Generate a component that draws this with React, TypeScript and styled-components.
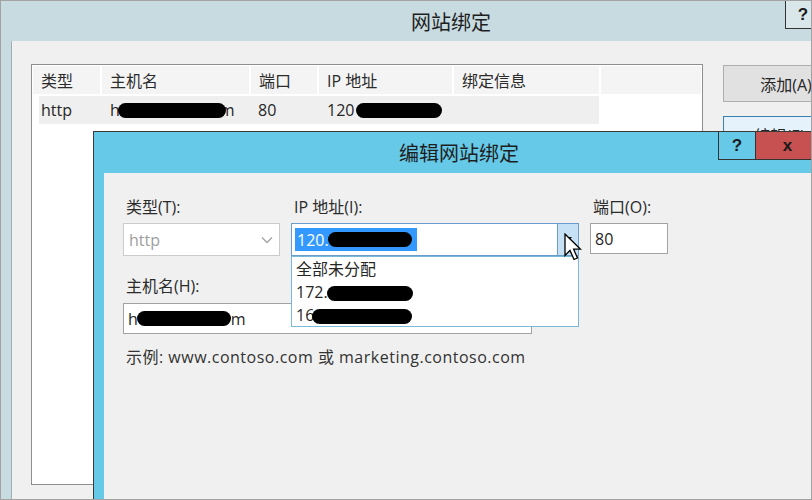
import React from "react";
import styled, { createGlobalStyle } from "styled-components";

const GlobalStyle = createGlobalStyle`
  html, body {
    margin: 0;
    padding: 0;
    background: #ffffff;
  }
  body {
    font-family: "Open Sans", "Noto Sans CJK SC", sans-serif;
    color: #262626;
  }
`;

// the screenshot frame, everything outside it is cut off
const Screen = styled.div`
  position: relative;
  width: 812px;
  height: 500px;
  box-sizing: border-box;
  border: 1px solid #a3a3a3;
  overflow: hidden;
  background: #c8dbe1;
`;

// outer window "网站绑定"
const OuterWindow = styled.div`
  width: 900px;
  height: 100%;
  display: flex;
  flex-direction: column;
  background: #c8dbe1;
`;

const TitleBar = styled.div<{ $height: number }>`
  height: ${(p) => p.$height}px;
  flex: none;
  display: grid;
  grid-template-columns: 1fr auto 1fr;
  align-items: start;
`;

const TitleText = styled.div<{ $height: number }>`
  grid-column: 2;
  height: ${(p) => p.$height}px;
  display: flex;
  align-items: center;
  font-size: 20px;
  color: #1e1e1e;
  white-space: nowrap;
`;

const CaptionButtons = styled.div<{ $right: number }>`
  grid-column: 3;
  justify-self: end;
  display: flex;
  margin-right: ${(p) => p.$right}px;
`;

const CaptionButton = styled.div<{ $width: number; $bg: string }>`
  width: ${(p) => p.$width}px;
  height: 28px;
  box-sizing: border-box;
  background: ${(p) => p.$bg};
  border: 1px solid #333333;
  border-top: none;
  margin-left: -1px;
  display: flex;
  align-items: center;
  justify-content: center;
  font-family: "Liberation Sans", Arial, sans-serif;
  font-weight: bold;
  font-size: 17px;
  color: #1a1a1a;
`;

const OuterBody = styled.div`
  flex: 1;
  display: flex;
  padding-left: 10px;
`;

const OuterClient = styled.div`
  flex: 1;
  display: flex;
  align-items: flex-start;
  background: #f0f0f0;
  border-left: 1px solid #9db0b6;
  padding: 23px 0 0 19px;
`;

const ListBox = styled.div`
  width: 672px;
  height: 421px;
  box-sizing: border-box;
  border: 1px solid #8d8e8f;
  background: #ffffff;
  padding: 1px;
  font-size: 16px;
`;

const HeaderRow = styled.div`
  display: grid;
  grid-template-columns: 67px 147px 66px 133px 145px 1fr;
  column-gap: 2px;
  height: 28px;
  margin-bottom: 2px;
`;

const HeaderCell = styled.div`
  background: #f4f4f4;
  display: flex;
  align-items: center;
  padding-left: 8px;
  color: #2b2b2b;
  white-space: nowrap;
`;

const DataRow = styled.div`
  display: grid;
  grid-template-columns: 63px 149px 68px 135px 145px;
  height: 28px;
  margin-left: 6px;
`;

const DataCell = styled.div<{ $pad: number }>`
  background: #efefef;
  display: flex;
  align-items: center;
  padding-left: ${(p) => p.$pad}px;
  white-space: nowrap;
  color: #262626;
`;

// redaction blot
const Blot = styled.span<{ $w: number; $h?: number }>`
  display: inline-block;
  width: ${(p) => p.$w}px;
  height: ${(p) => p.$h ?? 15}px;
  background: #000000;
  border-radius: 999px;
  filter: blur(0.6px);
  vertical-align: middle;
  position: relative;
`;

const ButtonColumn = styled.div`
  display: flex;
  flex-direction: column;
  gap: 14px;
  margin-left: 20px;
  padding-top: 1px;
`;

const PushButton = styled.div<{ $focused?: boolean }>`
  width: 126px;
  height: 37px;
  box-sizing: border-box;
  border: 1px solid ${(p) => (p.$focused ? "#3c7fb1" : "#adadad")};
  background: ${(p) => (p.$focused ? "#e5f1fb" : "#e1e1e1")};
  display: flex;
  align-items: center;
  justify-content: center;
  font-size: 16px;
  color: #262626;
`;

// inner dialog "编辑网站绑定", a window lying over the first one
const Dialog = styled.div`
  position: absolute;
  left: 92px;
  top: 130px;
  width: 732px;
  height: 400px;
  box-sizing: border-box;
  border: 1px solid #3a3a3a;
  background: #66c9e8;
  display: flex;
  flex-direction: column;
`;

const DialogBody = styled.div`
  flex: 1;
  display: flex;
  padding-left: 10px;
`;

const DialogClient = styled.div`
  flex: 1;
  background: #f0f0f0;
  padding: 24px 0 0 19px;
  font-size: 16px;
`;

const FieldRow = styled.div`
  display: grid;
  grid-template-columns: 157px 288px 78px;
  column-gap: 11px;
`;

const Field = styled.div`
  display: flex;
  flex-direction: column;
  position: relative;
`;

const Label = styled.div<{ $gap: number }>`
  height: 20px;
  line-height: 20px;
  padding-left: 3px;
  margin-bottom: ${(p) => p.$gap}px;
  color: #2b2b2b;
  white-space: nowrap;
`;

const Combo = styled.div<{ $active?: boolean }>`
  position: relative;
  height: 33px;
  box-sizing: border-box;
  display: flex;
  align-items: center;
  background: #ffffff;
  border: 1px solid ${(p) => (p.$active ? "#6a9ccc" : "#cbcbcb")};
`;

const ComboText = styled.div<{ $muted?: boolean }>`
  flex: 1;
  padding-left: 5px;
  color: ${(p) => (p.$muted ? "#9e9e9e" : "#262626")};
  white-space: nowrap;
`;

const Chevron = styled.svg`
  margin-right: 6px;
  flex: none;
`;

const Selection = styled.span`
  display: inline-flex;
  align-items: center;
  height: 23px;
  margin-left: -2px;
  padding-left: 2px;
  width: 120px;
  background: #3399ff;
  color: #ffffff;
`;

const DropButton = styled.div`
  position: relative;
  width: 21px;
  height: 100%;
  box-sizing: border-box;
  background: #c6e0f5;
  border-left: 1px solid #6a9ccc;
  display: flex;
  align-items: center;
  justify-content: center;
`;

const Pointer = styled.svg`
  position: absolute;
  left: 6px;
  top: 9px;
  z-index: 3;
`;

const DropList = styled.div`
  position: absolute;
  left: 0;
  top: 59px;
  width: 288px;
  height: 71px;
  box-sizing: border-box;
  border: 1px solid #78bad9;
  background: #ffffff;
  padding-top: 1px;
  z-index: 2;
`;

const DropItem = styled.div`
  height: 23px;
  line-height: 23px;
  padding-left: 4px;
  white-space: nowrap;
`;

const TextBox = styled.div<{ $width?: number }>`
  ${(p) => (p.$width ? `width: ${p.$width}px;` : "")}
  height: 31px;
  box-sizing: border-box;
  border: 1px solid #a2a2a2;
  background: #ffffff;
  display: flex;
  align-items: center;
  padding-left: 4px;
  white-space: nowrap;
`;

const HostField = styled.div`
  margin-top: 20px;
  display: flex;
  flex-direction: column;
`;

const Hint = styled.div`
  margin-top: 13px;
  padding-left: 3px;
  line-height: 20px;
  letter-spacing: 0.5px;
  color: #333333;
  white-space: nowrap;
`;

export default function App() {
  return (
    <>
      <GlobalStyle />
      <Screen>
        <OuterWindow>
          <TitleBar $height={40}>
            <TitleText $height={40}>网站绑定</TitleText>
            <CaptionButtons $right={80}>
              <CaptionButton $width={36} $bg="#d9e6ea">?</CaptionButton>
            </CaptionButtons>
          </TitleBar>
          <OuterBody>
            <OuterClient>
              <ListBox>
                <HeaderRow>
                  <HeaderCell>类型</HeaderCell>
                  <HeaderCell>主机名</HeaderCell>
                  <HeaderCell>端口</HeaderCell>
                  <HeaderCell>IP 地址</HeaderCell>
                  <HeaderCell>绑定信息</HeaderCell>
                  <HeaderCell />
                </HeaderRow>
                <DataRow>
                  <DataCell $pad={2}>http</DataCell>
                  <DataCell $pad={8}>
                    h<Blot $w={108} style={{ marginLeft: -2, marginRight: -6 }} />m
                  </DataCell>
                  <DataCell $pad={7}>80</DataCell>
                  <DataCell $pad={8}>
                    120<Blot $w={86} style={{ marginLeft: 2 }} />
                  </DataCell>
                  <DataCell $pad={8} />
                </DataRow>
              </ListBox>
              <ButtonColumn>
                <PushButton>添加(A)</PushButton>
                <PushButton $focused>编辑(E)...</PushButton>
              </ButtonColumn>
            </OuterClient>
          </OuterBody>
        </OuterWindow>

        <Dialog>
          <TitleBar $height={41}>
            <TitleText $height={41}>编辑网站绑定</TitleText>
            <CaptionButtons $right={4}>
              <CaptionButton $width={38} $bg="#66c9e8">?</CaptionButton>
              <CaptionButton $width={65} $bg="#c75050">x</CaptionButton>
            </CaptionButtons>
          </TitleBar>
          <DialogBody>
            <DialogClient>
              <FieldRow>
                <Field>
                  <Label $gap={6}>类型(T):</Label>
                  <Combo>
                    <ComboText $muted>http</ComboText>
                    <Chevron width="12" height="8" viewBox="0 0 12 8">
                      <path d="M1 1.5 L6 6.5 L11 1.5" fill="none" stroke="#a3a3a3" strokeWidth="1.3" />
                    </Chevron>
                  </Combo>
                </Field>
                <Field>
                  <Label $gap={6}>IP 地址(I):</Label>
                  <Combo $active>
                    <ComboText>
                      <Selection>
                        120.<Blot $w={84} style={{ marginLeft: -1 }} />
                      </Selection>
                    </ComboText>
                    <DropButton>
                      <svg width="7" height="5" viewBox="0 0 7 5">
                        <path d="M0 0 L7 0 L3.5 4.5 Z" fill="#1a1a1a" />
                      </svg>
                      <Pointer width="18" height="29" viewBox="0 0 18 29">
                        <path
                          d="M1 1 L1 22.5 L6 17.5 L10 26.5 L13.5 25 L9.6 16.2 L16.5 16.2 Z"
                          fill="#ffffff"
                          stroke="#000000"
                          strokeWidth="1.3"
                          strokeLinejoin="miter"
                        />
                      </Pointer>
                    </DropButton>
                  </Combo>
                  <DropList>
                    <DropItem>全部未分配</DropItem>
                    <DropItem>
                      172.<Blot $w={86} style={{ marginLeft: -1 }} />
                    </DropItem>
                    <DropItem>
                      16<Blot $w={100} style={{ marginLeft: -2 }} />
                    </DropItem>
                  </DropList>
                </Field>
                <Field>
                  <Label $gap={6}>端口(O):</Label>
                  <TextBox>80</TextBox>
                </Field>
              </FieldRow>
              <HostField>
                <Label $gap={7}>主机名(H):</Label>
                <TextBox $width={409}>
                  h<Blot $w={94} style={{ marginLeft: -1 }} />m
                </TextBox>
              </HostField>
              <Hint>示例: www.contoso.com 或 marketing.contoso.com</Hint>
            </DialogClient>
          </DialogBody>
        </Dialog>
      </Screen>
    </>
  );
}
